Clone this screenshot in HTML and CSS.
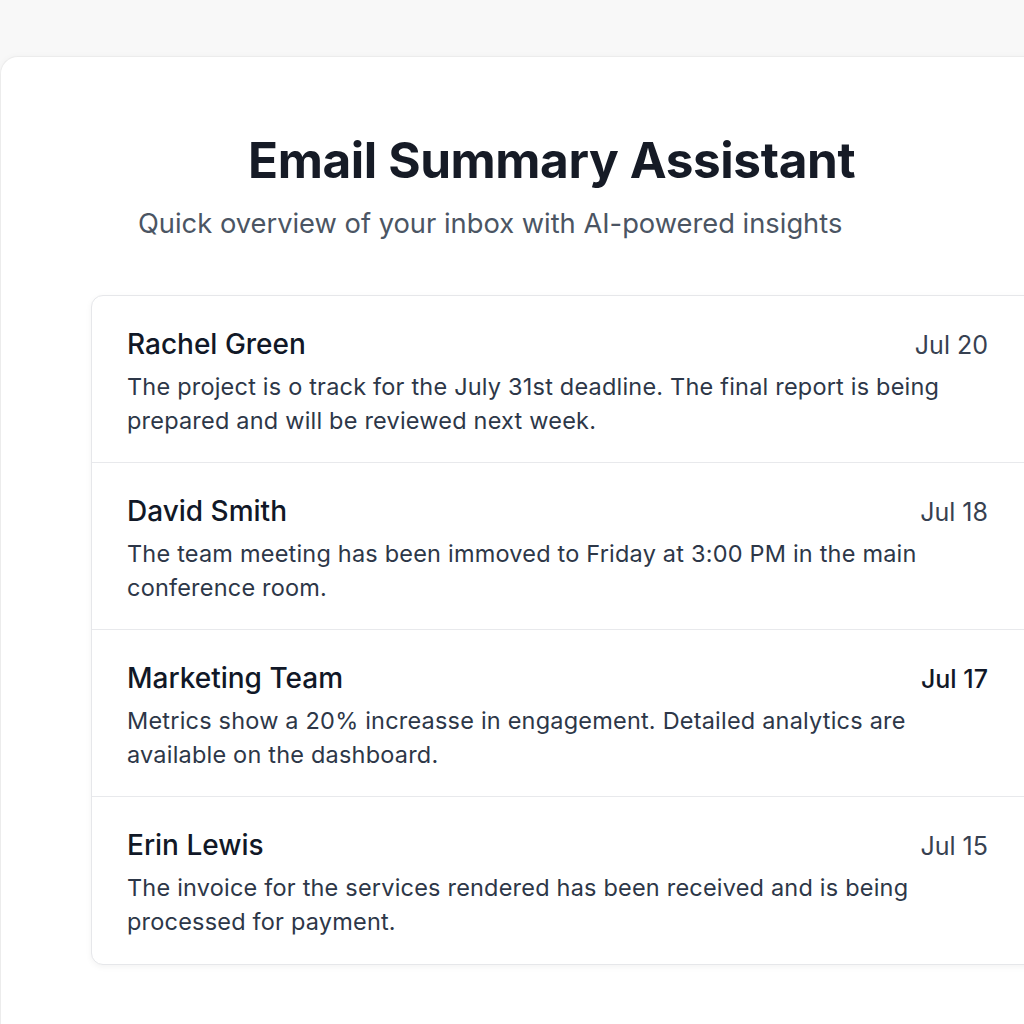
FILE: index.html
```html
<!DOCTYPE html>
<html lang="en">
<head>
<meta charset="utf-8">
<title>Email Summary Assistant</title>
<link rel="stylesheet" href="styles.css">
</head>
<body>
<div class="panel">
  <h1 class="title">Email Summary Assistant</h1>
  <p class="subtitle">Quick overview of your inbox with AI-powered insights</p>
  <div class="list">
    <div class="row">
      <div class="head"><span class="name">Rachel Green</span><span class="date">Jul 20</span></div>
      <p class="body">The project is o track for the July 31st deadline. The final report is being prepared and will be reviewed next week.</p>
    </div>
    <div class="row">
      <div class="head"><span class="name">David Smith</span><span class="date">Jul 18</span></div>
      <p class="body">The team meeting has been immoved to Friday at 3:00 PM in the main conference room.</p>
    </div>
    <div class="row">
      <div class="head"><span class="name">Marketing Team</span><span class="date strong">Jul 17</span></div>
      <p class="body">Metrics show a 20% increasse in engagement. Detailed analytics are available on the dashboard.</p>
    </div>
    <div class="row">
      <div class="head"><span class="name">Erin Lewis</span><span class="date">Jul 15</span></div>
      <p class="body">The invoice for the services rendered has been received and is being processed for payment.</p>
    </div>
  </div>
</div>
</body>
</html>
```
FILE: styles.css
```css
html, body {
  margin: 0;
  padding: 0;
  overflow: hidden;
  height: 100%;
}
body {
  background: #f8f8f8;
  font-family: Inter, "Noto Sans", sans-serif;
  color: #111827;
}
.panel {
  margin-top: 56px;
  width: 1100px;
  min-height: 1000px;
  background: #ffffff;
  border-top: 1px solid #ececec;
  border-left: 1px solid #ececec;
  border-top-left-radius: 18px;
  box-shadow: 0 0 6px rgba(0,0,0,0.03);
  padding-top: 72px;
  box-sizing: border-box;
}
.title {
  margin: 0 0 0 247px;
  font-size: 49.5px;
  line-height: 62px;
  font-weight: 700;
  color: #161b26;
  letter-spacing: -0.4px;
}
.subtitle {
  margin: 15px 0 0 137px;
  font-size: 27.3px;
  line-height: 36px;
  color: #4b5563;
}
.list {
  margin: 53px 0 0 90px;
  width: 960px;
  background: #fff;
  border: 1px solid #e6e7ea;
  border-radius: 12px;
  box-shadow: 0 2px 6px rgba(0,0,0,0.05);
}
.row {
  padding: 31px 64px 24px 35px;
  border-bottom: 1px solid #e8e9ec;
}
.row:last-child {
  border-bottom: none;
  padding-bottom: 25px;
}
.head {
  display: flex;
  justify-content: space-between;
  align-items: baseline;
  height: 34px;
}
.name {
  font-size: 28px;
  line-height: 34px;
  font-weight: 500;
  color: #111827;
}
.date {
  font-size: 25px;
  line-height: 34px;
  color: #374151;
}
.date.strong {
  color: #111827;
  font-weight: 500;
}
.body {
  margin: 9px 0 0 0;
  font-size: 23.5px;
  line-height: 34px;
  letter-spacing: 0.2px;
  color: #2d3748;
}
```
